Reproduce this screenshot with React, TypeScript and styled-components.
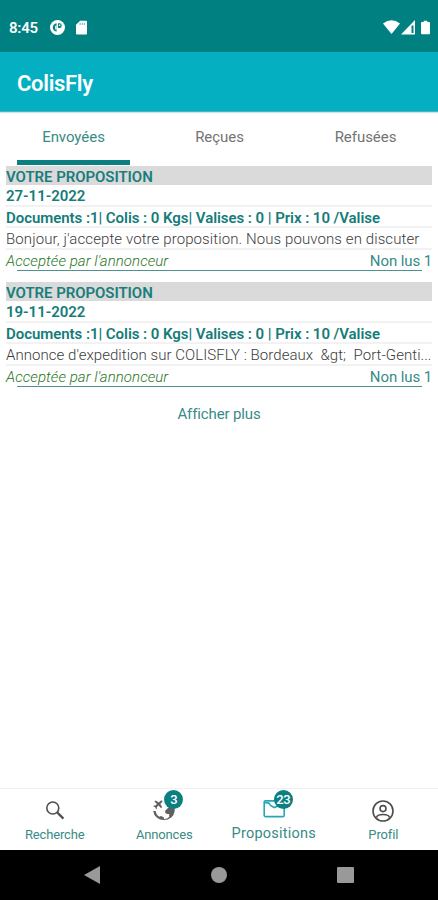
import React from 'react';
import styled, { createGlobalStyle } from 'styled-components';

const Global = createGlobalStyle`
  * { box-sizing: border-box; }
  body { margin: 0; background: #fff; font-family: Roboto, "Liberation Sans", sans-serif; }
`;

const Screen = styled.div`
  width: 438px; height: 900px; display: flex; flex-direction: column;
  background: #fff; overflow: hidden;
`;
const StatusBar = styled.div`
  height: 52px; flex: none; display: flex; align-items: center;
  padding: 2px 8px 0 9px; background: #008080; color: #fff;
`;
const Clock = styled.span`
  width: 41px; padding-top: 1px; font-size: 15px; font-weight: 600; letter-spacing: -0.25px;
`;
const StatusIcons = styled.div<{ $gap: number; $end?: boolean }>`
  display: flex; align-items: center; gap: ${p => p.$gap}px;
  margin-left: ${p => (p.$end ? 'auto' : '0')};
  svg { display: block; }
`;
const AppBar = styled.header`
  height: 60px; flex: none; padding: 4px 17px 0; display: flex; align-items: center;
  background: #04afc2; border-bottom: 1px solid #4fb4c2; color: #fff;
  box-shadow: 0 1px 1px #cfe4ea;
`;
const Title = styled.h1`
  margin: 0; font-size: 22px; line-height: 28px; font-weight: 600; letter-spacing: -0.3px;
`;
const Tabs = styled.nav`
  height: 53px; flex: none; display: grid; grid-template-columns: repeat(3, 146px);
`;
const Tab = styled.div<{ $active?: boolean }>`
  display: flex; justify-content: center; padding-top: 16px;
  margin: 0 16px 0 17px; font-size: 15px; line-height: 18px; letter-spacing: -0.05px;
  color: ${p => (p.$active ? '#388b86' : '#747474')};
  border-bottom: 5px solid ${p => (p.$active ? '#0b8080' : 'transparent')};
`;
const List = styled.main`
  flex: 1; padding: 1px 6px 0;
`;
const Card = styled.article`
  height: 116px;
`;
const CardHead = styled.div`
  height: 19px; background: #dadada; color: #197e7c;
  font-size: 15px; line-height: 22px; font-weight: 600; letter-spacing: -0.06px;
`;
const Line = styled.div<{ $bold?: boolean; $h: number; $track: number }>`
  height: ${p => p.$h}px; line-height: 23px; white-space: pre; overflow: hidden;
  border-bottom: 2px solid #f2f2f2; font-size: 15px;
  font-weight: ${p => (p.$bold ? 600 : 300)};
  color: ${p => (p.$bold ? '#147c79' : '#3c3c3c')};
  letter-spacing: ${p => p.$track}px;
`;
const Foot = styled.div`
  height: 20px; display: flex; justify-content: space-between;
  font-size: 15px; line-height: 22px; color: #388b86; font-weight: 300;
`;
const State = styled.em`
  color: #1f7522; letter-spacing: 0.07px;
`;
const Unread = styled.span`
  font-weight: 400; letter-spacing: -0.1px;
`;
const Rule = styled.div`
  height: 1px; margin: 0 10px 0 11px; background: #4c928f;
`;
const More = styled.button`
  display: block; margin: -1px auto 0; padding: 8px; border: 0; background: none;
  font: 400 15px/18px Roboto, sans-serif; color: #388b86; letter-spacing: -0.13px;
`;
const BottomNav = styled.nav`
  height: 62px; flex: none; display: grid; grid-template-columns: repeat(4, 109.5px);
  border-top: 1px solid #f0f0f0;
`;
const NavItem = styled.div`
  display: flex; flex-direction: column; align-items: center; padding-top: 10px;
`;
const IconBox = styled.div`
  position: relative; width: 24px; height: 24px;
  svg { display: block; }
`;
const Badge = styled.span`
  position: absolute; left: 12px; top: -9px; width: 19px; height: 19px; border-radius: 50%;
  background: #0a8080; color: #fff; display: grid; place-items: center;
  font-size: 13px; line-height: 19px; font-weight: 500; letter-spacing: -0.3px;
`;
const NavLabel = styled.span<{ $large?: boolean }>`
  font-size: ${p => (p.$large ? 14.5 : 13)}px; line-height: 20px; color: #388b86;
  margin-top: ${p => (p.$large ? 1 : 2)}px;
  letter-spacing: ${p => (p.$large ? 0.22 : -0.15)}px; white-space: nowrap;
`;
const SystemBar = styled.div`
  height: 50px; flex: none; background: #000; display: grid;
  grid-template-columns: 184px 70px 183px; place-items: center;
  svg { display: block; }
`;

const SearchIcon = () => (
  <svg width="24" height="24" viewBox="0 0 24 24" fill="none" stroke="#505050">
    <circle cx="9.8" cy="9" r="6" strokeWidth="1.6" />
    <path d="M14.2 13.400l6.200 6.200" strokeWidth="2.2" />
  </svg>
);
const GlobeIcon = () => (
  <svg width="24" height="24" viewBox="0 0 24 24" fill="#606060">
    <path fillRule="evenodd" d="M1.200 12A10.800 10 0 0 0 22.700 12V8H17l-3.800 3.800q-.5 2.700 2 3.200h2v3Q15 20.200 12 20l-.3-1.700-2.800-1.300-1.500.7Q4 15.800 3.700 12z" />
    <path d="M2.400 2.400l1.200-.9 3.200 1.900 2.200-2 1.200.2.200 1.100-2.100 2.200 1.800 3.200-1 1.100-2.600-2.600-1.600 1.500.1 1.500-.8.700-1-2-2-1 .7-.8 1.500.1 1.600-1.600z" />
  </svg>
);
const MailIcon = () => (
  <svg width="24" height="24" viewBox="0 0 24 24" fill="none" stroke="#27a7b6" strokeWidth="1.6">
    <path d="M13.500 1.900H3.200a1 1 0 0 0-1 1v13.700a1 1 0 0 0 1 1h18a1 1 0 0 0 1-1V8" />
    <path d="M2.500 3.500l4.300.6 2 2.600 3.500 1.800 5-2" />
  </svg>
);
const ProfileIcon = () => (
  <svg width="24" height="24" viewBox="0 0 24 24" fill="none" stroke="#4c4c4c" strokeWidth="1.600">
    <circle cx="12" cy="12" r="10" />
    <circle cx="12" cy="9.600" r="3" />
    <path d="M5.500 18.500c.4-2 3.500-3 6.500-3s6.100 1 6.500 3" />
  </svg>
);

const offers = [
  { date: '27-11-2022', text: 'Bonjour, j\'accepte votre proposition. Nous pouvons en discuter', track: 0.1 },
  { date: '19-11-2022', text: 'Annonce d\'expedition sur COLISFLY : Bordeaux  &gt;  Port-Genti...', track: 0.05 },
];
const navItems = [
  { label: 'Recherche', icon: <SearchIcon /> },
  { label: 'Annonces', icon: <GlobeIcon />, badge: 3 },
  { label: 'Propositions', icon: <MailIcon />, badge: 23, large: true },
  { label: 'Profil', icon: <ProfileIcon /> },
];

export default function App() {
  return (
    <Screen>
      <Global />
      <StatusBar>
        <Clock>8:45</Clock>
        <StatusIcons $gap={11}>
          <svg width="15" height="15" viewBox="0 0 16 16">
            <circle cx="8" cy="8" r="8" fill="#fff" />
            <path d="M7 3.500v9Q3 11.500 3 8t4-4.500z" fill="#008080" />
            <path d="M8.500 3.500h1.700q2.300 0 2.300 2.500T10.200 8.500H8.500z" fill="#008080" />
            <path d="M5.500 6H7v4H5.500zM9.500 4.800h1.500v1.700H9.500z" fill="#fff" />
          </svg>
          <svg width="11" height="15" viewBox="0 0 12 15">
            <path d="M4.500 0H11q1 0 1 1v13q0 1-1 1H1q-1 0-1-1V4.500z" fill="#fff" />
            <path d="M4.500 2.300v2.500M6.800 2.300v2.500M9.100 2.300v2.500" stroke="#008080" strokeWidth="1.100" opacity=".55" />
          </svg>
        </StatusIcons>
        <StatusIcons $gap={1} $end>
          <svg width="17" height="14" viewBox="0 0 17 14"><path d="M0 3.500Q8.500-3 17 3.500L8.500 14z" fill="#fff" /></svg>
          <svg width="19" height="15" viewBox="0 0 19 15">
            <path d="M0 14.500L14 0v14.500z" fill="#fff" />
            <path d="M10.500 5.500v7.500h2V5.500z" fill="#008080" />
          </svg>
          <svg width="9" height="15" viewBox="0 0 10 15"><path d="M3 0h4v1.500h2q1 0 1 1V14q0 1-1 1H1q-1 0-1-1V2.500q0-1 1-1h2z" fill="#fff" /></svg>
        </StatusIcons>
      </StatusBar>
      <AppBar><Title>ColisFly</Title></AppBar>
      <Tabs>
        <Tab $active>Envoyées</Tab>
        <Tab>Reçues</Tab>
        <Tab>Refusées</Tab>
      </Tabs>
      <List>
        {offers.map(o => (
          <Card key={o.date}>
            <CardHead>VOTRE PROPOSITION</CardHead>
            <Line $bold $h={22} $track={-0.02}>{o.date}</Line>
            <Line $bold $h={21} $track={-0.05}>Documents :1| Colis : 0 Kgs| Valises : 0 | Prix : 10 /Valise</Line>
            <Line $h={22} $track={o.track}>{o.text}</Line>
            <Foot><State>Acceptée par l'annonceur</State><Unread>Non lus 1</Unread></Foot>
            <Rule />
          </Card>
        ))}
        <More>Afficher plus</More>
      </List>
      <BottomNav>
        {navItems.map(n => (
          <NavItem key={n.label}>
            <IconBox>{n.icon}{n.badge && <Badge>{n.badge}</Badge>}</IconBox>
            <NavLabel $large={n.large}>{n.label}</NavLabel>
          </NavItem>
        ))}
      </BottomNav>
      <SystemBar>
        <svg width="16" height="18" viewBox="0 0 16 18"><path d="M0 9L16 0v18z" fill="#999" /></svg>
        <svg width="16" height="16" viewBox="0 0 16 16"><circle cx="8" cy="8" r="8" fill="#999" /></svg>
        <svg width="17" height="16" viewBox="0 0 17 16"><rect width="17" height="16" rx="1" fill="#999" /></svg>
      </SystemBar>
    </Screen>
  );
}
